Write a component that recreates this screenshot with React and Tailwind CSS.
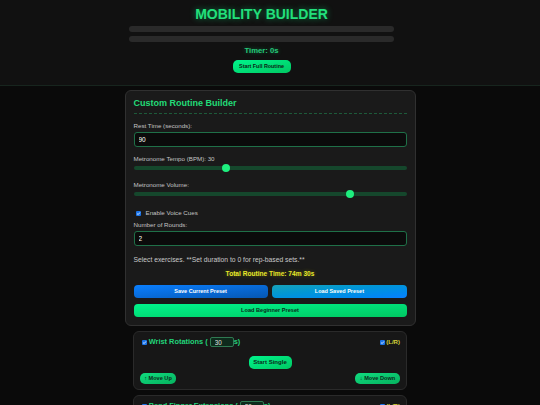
import React from "react";

const Check = ({ className = "" }) => (
  <span className={"flex items-center justify-center w-[5px] h-[5px] shrink-0 rounded-[1px] bg-[#1a73e8] " + className}>
    <svg viewBox="0 0 10 10" className="block w-[5px] h-[5px]">
      <path d="M2.2 5.2 L4.3 7.2 L7.9 2.9" stroke="white" strokeWidth="1.6" fill="none" />
    </svg>
  </span>
);

const Label = ({ children, className = "" }) => (
  <div className={"text-[6.2px] leading-[8px] text-[#c4c4c4] " + className}>{children}</div>
);

const Field = ({ value, className = "" }) => (
  <input
    readOnly
    value={value}
    className={
      "block w-full h-[15px] rounded-[3px] border border-[#1f7048] bg-[#0b0b0b] px-[4px] text-[6.5px] text-white outline-none font-['Liberation_Sans',Arial,sans-serif] " +
      className
    }
  />
);

const Slider = ({ pct, className = "" }) => (
  <div className={"relative h-[8px] flex items-center " + className}>
    <div className="w-full h-[3.5px] rounded-full bg-[#15472c]" />
    <div
      className="absolute top-0 w-[8px] h-[8px] rounded-full bg-[#1ef07f]"
      style={{ left: `calc(${pct}% - 4px)` }}
    />
  </div>
);

const exercises = [
  { name: "Wrist Rotations", dur: 30 },
  { name: "Bend Finger Extensions", dur: 30 },
  { name: "Shoulder Circles", dur: 30 },
];

const ExerciseCard = ({ name, dur }) => (
  <div className="rounded-[6px] border border-[#2a2a2a] bg-[#171717] px-[6px] pt-[5px] pb-[5px]">
    <div className="flex items-center justify-between h-[10px]">
      <div className="flex items-center">
        <Check className="ml-[2px]" />
        <span className="ml-[1.7px] text-[7.4px] leading-[10px] font-bold text-[#22d47a] whitespace-pre">{name + " ( "}</span>
        <input
          readOnly
          value={dur}
          className="w-[24px] h-[10px] rounded-[2px] border border-[#2f7a52] bg-[#0e2a1c] pl-[4px] text-[6.3px] text-[#e0e0e0] outline-none font-['Liberation_Sans',Arial,sans-serif]"
        />
        <span className="text-[7.4px] leading-[10px] font-bold text-[#22d47a]">s)</span>
      </div>
      <div className="flex items-center gap-[1.5px]">
        <Check />
        <span className="text-[6.1px] leading-[8px] font-bold text-[#d4d43a]">(L/R)</span>
      </div>
    </div>
    <div className="flex justify-center mt-[9px]">
      <button className="h-[13px] w-[43px] rounded-[5px] bg-linear-to-br from-[#00f58c] to-[#00c862] text-[6.05px] font-bold text-[#0b2b1a] font-['Liberation_Sans',Arial,sans-serif]">
        Start Single
      </button>
    </div>
    <div className="flex justify-between mt-[4px]">
      <button className="h-[11px] w-[36px] rounded-[5px] bg-linear-to-br from-[#10dc80] to-[#06b25e] text-[5.6px] font-bold text-[#0b2b1a] font-['Liberation_Sans',Arial,sans-serif]">
        ↑ Move Up
      </button>
      <button className="h-[11px] w-[45px] rounded-[5px] bg-linear-to-br from-[#10dc80] to-[#06b25e] text-[5.6px] font-bold text-[#0b2b1a] font-['Liberation_Sans',Arial,sans-serif]">
        ↓ Move Down
      </button>
    </div>
  </div>
);

export default function App() {
  return (
    <div className="min-h-screen bg-[#0a0a0a] font-['Liberation_Sans',Arial,sans-serif] pb-[20px]">
      {/* Header */}
      <header className="bg-[#111111] border-b border-[#17251e] pt-[6px] pb-[12px] pr-[17px] flex flex-col items-center">
        <h1 className="text-[14px] leading-[16px] font-bold text-[#22e07c] [text-shadow:0_0_6px_rgba(0,255,136,0.45)]">
          MOBILITY BUILDER
        </h1>
        <div className="mt-[4px] w-[265px] h-[6px] rounded-full bg-[#2a2a2a]" />
        <div className="mt-[4px] w-[265px] h-[6px] rounded-full bg-[#2a2a2a]" />
        <div className="mt-[4px] text-[7.7px] leading-[10px] font-bold text-[#26c97a] [text-shadow:0_0_4px_rgba(0,255,136,0.35)]">
          Timer: 0s
        </div>
        <button className="mt-[4px] h-[13px] w-[58px] rounded-[5px] bg-linear-to-br from-[#00f58c] to-[#00c862] text-[5.4px] font-bold text-[#0b2414] font-['Liberation_Sans',Arial,sans-serif]">
          Start Full Routine
        </button>
      </header>

      {/* Builder card */}
      <section className="mx-auto mt-[4px] w-[291px] rounded-[6px] border border-[#303030] bg-[#1a1a1a] px-[8px] pt-[7px] pb-[8px]">
        <h2 className="text-[9px] leading-[11px] font-bold text-[#22dc78] pb-[4px] border-b border-dashed border-[#1d5a3a]">
          Custom Routine Builder
        </h2>

        <Label className="mt-[8px]">Rest Time (seconds):</Label>
        <Field value="90" className="mt-[2px]" />

        <Label className="mt-[8px]">Metronome Tempo (BPM): 30</Label>
        <Slider pct={34} className="mt-[1px]" />

        <Label className="mt-[9px]">Metronome Volume:</Label>
        <Slider pct={79.2} className="mt-[1px]" />

        <div className="mt-[11px] h-[8px] flex items-center">
          <Check className="ml-[2px]" />
          <span className="ml-[5px] text-[6.2px] leading-[8px] text-[#c4c4c4]">Enable Voice Cues</span>
        </div>

        <Label className="mt-[4px]">Number of Rounds:</Label>
        <Field value="2" className="mt-[2px]" />

        <div className="mt-[10px] text-[6.75px] leading-[8px] text-[#c8c8c8]">
          Select exercises. **Set duration to 0 for rep-based sets.**
        </div>

        <div className="mt-[6px] text-center text-[6.6px] leading-[8px] font-bold text-[#e8e82a] [text-shadow:0_0_4px_rgba(255,255,0,0.3)]">
          Total Routine Time: 74m 30s
        </div>

        <div className="mt-[7px] flex gap-[4.5px]">
          <button className="h-[13px] flex-1 rounded-[4px] bg-linear-to-br from-[#0a7fff] to-[#0657b2] text-[5.5px] font-bold text-white font-['Liberation_Sans',Arial,sans-serif]">
            Save Current Preset
          </button>
          <button className="h-[13px] flex-1 rounded-[4px] bg-linear-to-br from-[#17a2b8] to-[#0a7fff] text-[5.5px] font-bold text-white font-['Liberation_Sans',Arial,sans-serif]">
            Load Saved Preset
          </button>
        </div>
        <button className="block mt-[6px] h-[13px] w-full rounded-[4px] bg-linear-to-br from-[#00f58c] to-[#00c862] text-[5.6px] font-bold text-[#0b2b1a] font-['Liberation_Sans',Arial,sans-serif]">
          Load Beginner Preset
        </button>
      </section>

      {/* Exercise list */}
      <div className="mx-auto mt-[5px] w-[274px] flex flex-col gap-[5px]">
        {exercises.map((e) => (
          <ExerciseCard key={e.name} {...e} />
        ))}
      </div>
    </div>
  );
}
